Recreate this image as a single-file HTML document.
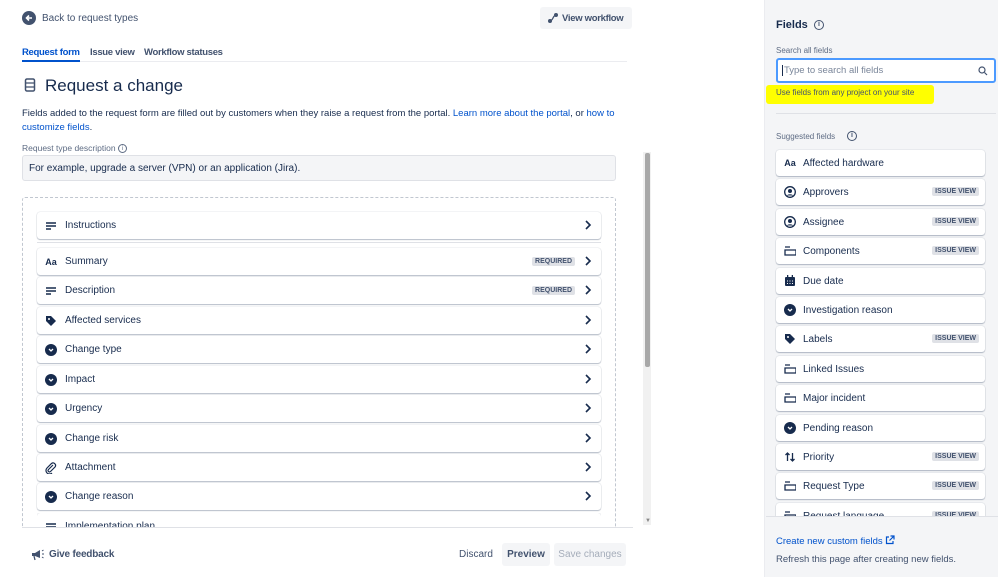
<!DOCTYPE html>
<html><head><meta charset="utf-8"><style>
*{box-sizing:border-box;margin:0;padding:0}
body{width:998px;height:577px;overflow:hidden;background:#fff;font-family:"Liberation Sans",sans-serif;color:#172b4d;position:relative;font-size:10px}
.a{position:absolute}
.row{position:absolute;left:37px;width:564px;height:27px;background:#fff;border-radius:3px;box-shadow:0 1px 1px rgba(9,30,66,.25),0 0 1px rgba(9,30,66,.31);display:flex;align-items:center;padding-left:8px;font-size:10px;color:#172b4d}
.row .ic{width:12px;height:12px;margin-right:8px;display:flex;align-items:center;justify-content:center}
.row .chev{position:absolute;right:9px;top:8px}
.req{position:absolute;right:26px;top:9px;background:#dfe1e6;color:#42526e;font-size:7px;font-weight:bold;padding:1px 3px;border-radius:2px}
.card{position:absolute;left:776px;width:209px;height:26px;background:#fff;border-radius:3px;box-shadow:0 1px 1px rgba(9,30,66,.25),0 0 1px rgba(9,30,66,.31);display:flex;align-items:center;padding-left:8px;font-size:10px}
.card .ic{width:12px;height:12px;margin-right:7px;display:flex;align-items:center;justify-content:center}
.iv{position:absolute;right:6px;top:8px;background:#dfe1e6;color:#42526e;font-size:7px;font-weight:bold;padding:1px 3px;border-radius:2px}
.dd{width:12px;height:12px;border-radius:50%;background:#172b4d;display:flex;align-items:center;justify-content:center}
.tab{position:absolute;top:47px;font-size:9.5px;font-weight:bold;letter-spacing:-0.3px;color:#42526e}
</style></head><body>
<!-- header -->
<svg class="a" style="left:22px;top:11px" width="14" height="14"><circle cx="7" cy="7" r="7" fill="#42526e"/><path d="M10 7H4.5M7 4.5L4.5 7 7 9.5" stroke="#fff" stroke-width="1.6" fill="none"/></svg>
<div class="a" style="left:42px;top:13px;font-size:10px;color:#42526e">Back to request types</div>
<div class="a" style="left:540px;top:7px;width:92px;height:22px;background:#f4f5f7;border-radius:3px;font-size:9.5px;letter-spacing:-0.3px;font-weight:bold;color:#42526e;padding:6px 0 0 22px">View workflow</div>
<svg class="a" style="left:547px;top:12px" width="12" height="12"><circle cx="3" cy="9" r="2" fill="#42526e"/><circle cx="9" cy="3" r="2" fill="#42526e"/><path d="M3 9C6 9 6 3 9 3" stroke="#42526e" fill="none" stroke-width="1.3"/></svg>
<div class="tab" style="left:22px;color:#0052cc">Request form</div>
<div class="a" style="left:22px;top:60px;width:58px;height:2px;background:#0052cc"></div>
<div class="tab" style="left:90px">Issue view</div>
<div class="tab" style="left:144px">Workflow statuses</div>
<div class="a" style="left:80px;top:61px;width:547px;height:1px;background:#ebecf0"></div>
<svg class="a" style="left:24px;top:78px" width="12" height="14"><rect x="1.5" y="1" width="9" height="12" rx="1.5" stroke="#42526e" stroke-width="1.5" fill="none"/><path d="M2 5H10M2 9H10" stroke="#42526e" stroke-width="1.3"/></svg>
<div class="a" style="left:45px;top:76px;font-size:17px;color:#172b4d">Request a change</div>
<div class="a" style="left:22px;top:107px;width:600px;font-size:9.5px;line-height:13.5px;color:#172b4d">Fields added to the request form are filled out by customers when they raise a request from the portal. <span style="color:#0052cc">Learn more about the portal</span>, or <span style="color:#0052cc">how to customize fields</span>.</div>
<div class="a" style="left:22px;top:143px;font-size:8.5px;color:#5e6c84">Request type description <span style="display:inline-block;width:9px;height:9px;border:1px solid #5e6c84;border-radius:50%;font-size:6px;text-align:center;line-height:8px;vertical-align:middle">i</span></div>
<div class="a" style="left:22px;top:155px;width:594px;height:26px;background:#f4f5f7;border:1px solid #dfe1e6;border-radius:3px;font-size:10px;padding:7px 0 0 6px">For example, upgrade a server (VPN) or an application (Jira).</div>
<div class="a" style="left:22px;top:197px;width:594px;height:360px;border:1px dashed #c1c7d0;border-radius:3px"></div>
<div class="a" style="left:0;top:528px;width:640px;height:49px;background:#fff"></div>
<div class="a" style="left:22px;top:527px;width:611px;height:1px;background:#dfe1e6"></div>
<!-- scrollbar -->
<div class="a" style="left:643px;top:152px;width:8px;height:373px;background:#f1f1f1"></div>
<div class="a" style="left:645px;top:153px;width:5px;height:214px;background:#a8a8a8;border-radius:2px"></div>
<div class="a" style="left:645px;top:518px;font-size:6px;color:#888">▼</div>

<!-- rows -->
<div class="row" style="top:212px"><span class="ic"><svg width="12" height="12"><path d="M1 3H11M1 6H11M1 9H6" stroke="#172b4d" stroke-width="1.5"/></svg></span>Instructions<svg class="chev" width="8" height="10"><path d="M2 1L6 5 2 9" stroke="#172b4d" stroke-width="1.6" fill="none"/></svg></div>
<div class="a" style="left:37px;top:242px;width:564px;height:1px;background:#dfe1e6"></div>
<div class="row" style="top:248px"><span class="ic" style="font-weight:bold;font-size:9px">Aa</span>Summary<span class="req">REQUIRED</span><svg class="chev" width="8" height="10"><path d="M2 1L6 5 2 9" stroke="#172b4d" stroke-width="1.6" fill="none"/></svg></div>
<div class="row" style="top:277px"><span class="ic"><svg width="12" height="12"><path d="M1 3H11M1 6H11M1 9H6" stroke="#172b4d" stroke-width="1.5"/></svg></span>Description<span class="req">REQUIRED</span><svg class="chev" width="8" height="10"><path d="M2 1L6 5 2 9" stroke="#172b4d" stroke-width="1.6" fill="none"/></svg></div>
<div class="row" style="top:307px"><span class="ic"><svg width="12" height="12"><path d="M1 1H6L11 6 6 11 1 6Z" fill="#172b4d"/><circle cx="4" cy="4" r="1" fill="#fff"/></svg></span>Affected services<svg class="chev" width="8" height="10"><path d="M2 1L6 5 2 9" stroke="#172b4d" stroke-width="1.6" fill="none"/></svg></div>
<div class="row" style="top:336px"><span class="ic"><span class="dd"><svg width="6" height="4"><path d="M1 1L3 3 5 1" stroke="#fff" stroke-width="1.3" fill="none"/></svg></span></span>Change type<svg class="chev" width="8" height="10"><path d="M2 1L6 5 2 9" stroke="#172b4d" stroke-width="1.6" fill="none"/></svg></div>
<div class="row" style="top:366px"><span class="ic"><span class="dd"><svg width="6" height="4"><path d="M1 1L3 3 5 1" stroke="#fff" stroke-width="1.3" fill="none"/></svg></span></span>Impact<svg class="chev" width="8" height="10"><path d="M2 1L6 5 2 9" stroke="#172b4d" stroke-width="1.6" fill="none"/></svg></div>
<div class="row" style="top:395px"><span class="ic"><span class="dd"><svg width="6" height="4"><path d="M1 1L3 3 5 1" stroke="#fff" stroke-width="1.3" fill="none"/></svg></span></span>Urgency<svg class="chev" width="8" height="10"><path d="M2 1L6 5 2 9" stroke="#172b4d" stroke-width="1.6" fill="none"/></svg></div>
<div class="row" style="top:425px"><span class="ic"><span class="dd"><svg width="6" height="4"><path d="M1 1L3 3 5 1" stroke="#fff" stroke-width="1.3" fill="none"/></svg></span></span>Change risk<svg class="chev" width="8" height="10"><path d="M2 1L6 5 2 9" stroke="#172b4d" stroke-width="1.6" fill="none"/></svg></div>
<div class="row" style="top:454px"><span class="ic"><svg width="12" height="12"><path d="M8 3L3.5 7.5a1.3 1.3 0 0 0 2 2L10 5a2.5 2.5 0 0 0-3.5-3.5L2 6a3.5 3.5 0 0 0 5 5" stroke="#172b4d" stroke-width="1.2" fill="none"/></svg></span>Attachment<svg class="chev" width="8" height="10"><path d="M2 1L6 5 2 9" stroke="#172b4d" stroke-width="1.6" fill="none"/></svg></div>
<div class="row" style="top:483px"><span class="ic"><span class="dd"><svg width="6" height="4"><path d="M1 1L3 3 5 1" stroke="#fff" stroke-width="1.3" fill="none"/></svg></span></span>Change reason<svg class="chev" width="8" height="10"><path d="M2 1L6 5 2 9" stroke="#172b4d" stroke-width="1.6" fill="none"/></svg></div>
<div class="a" style="left:37px;top:513px;width:564px;height:14px;overflow:hidden"><div class="row" style="left:0;top:0">
<span class="ic"><svg width="12" height="12"><path d="M1 3H11M1 6H11M1 9H6" stroke="#172b4d" stroke-width="1.5"/></svg></span>Implementation plan</div></div>

<!-- footer -->
<svg class="a" style="left:31px;top:548px" width="13" height="13"><path d="M1 5H4L9 2V10L4 8H1Z" fill="#42526e"/><path d="M3 8L4 12" stroke="#42526e" stroke-width="1.3"/><path d="M11 3L12.5 2M11 6H13M11 9L12.5 10" stroke="#42526e"/></svg>
<div class="a" style="left:49px;top:549px;font-size:10px;font-weight:bold;letter-spacing:-0.2px;color:#42526e">Give feedback</div>
<div class="a" style="left:459px;top:549px;font-size:10px;color:#42526e">Discard</div>
<div class="a" style="left:502px;top:543px;width:48px;height:23px;background:#f4f5f7;border-radius:3px;font-size:10px;font-weight:bold;color:#42526e;text-align:center;line-height:23px">Preview</div>
<div class="a" style="left:554px;top:543px;width:72px;height:23px;background:#f4f5f7;border-radius:3px;font-size:10px;color:#a5adba;text-align:center;line-height:23px">Save changes</div>

<!-- right panel -->
<div class="a" style="left:764px;top:0;width:234px;height:577px;background:#f4f5f7;border-left:1px solid #ebecf0"></div>
<div class="a" style="left:776px;top:19px;font-size:11px;font-weight:bold;color:#172b4d">Fields</div>
<div class="a" style="left:814px;top:20px;width:10px;height:10px;border:1.2px solid #42526e;border-radius:50%;font-size:7px;text-align:center;line-height:8px;font-weight:bold;color:#42526e">i</div>
<div class="a" style="left:776px;top:46px;font-size:8px;color:#5e6c84">Search all fields</div>
<div class="a" style="left:776px;top:58px;width:220px;height:25px;background:#fff;border:2px solid #4c9aff;border-radius:3px;font-size:9.5px;color:#7a869a;padding:5px 0 0 4px"><span style="border-left:1px solid #172b4d;padding-left:1px">Type to search all fields</span></div>
<svg class="a" style="left:978px;top:66px" width="10" height="10"><circle cx="4" cy="4" r="3" stroke="#42526e" stroke-width="1.2" fill="none"/><path d="M6.5 6.5L9 9" stroke="#42526e" stroke-width="1.2"/></svg>
<div class="a" style="left:766px;top:85px;width:168px;height:19px;background:#ffff00;border-radius:3px"></div>
<div class="a" style="left:776px;top:88px;font-size:8px;color:#42526e">Use fields from any project on your site</div>
<div class="a" style="left:776px;top:113px;width:220px;height:1px;background:#dfe1e6"></div>
<div class="a" style="left:776px;top:132px;font-size:8px;color:#5e6c84">Suggested fields</div>
<div class="a" style="left:847px;top:131px;width:10px;height:10px;border:1.2px solid #42526e;border-radius:50%;font-size:7px;text-align:center;line-height:8px;font-weight:bold;color:#42526e">i</div>

<div class="a" style="left:766px;top:148px;width:232px;height:368px;overflow:hidden">
<div style="position:relative;left:-766px;top:-148px;width:998px;height:600px">
<div class="card" style="top:150px"><span class="ic" style="font-weight:bold;font-size:9px">Aa</span>Affected hardware</div>
<div class="card" style="top:179px"><span class="ic"><svg width="12" height="12"><circle cx="6" cy="6" r="5.3" stroke="#172b4d" stroke-width="1.3" fill="none"/><circle cx="6" cy="5" r="2" fill="#172b4d"/><path d="M2.8 9.5a4 3 0 0 1 6.4 0" fill="#172b4d"/></svg></span>Approvers<span class="iv">ISSUE VIEW</span></div>
<div class="card" style="top:209px"><span class="ic"><svg width="12" height="12"><circle cx="6" cy="6" r="5.3" stroke="#172b4d" stroke-width="1.3" fill="none"/><circle cx="6" cy="5" r="2" fill="#172b4d"/><path d="M2.8 9.5a4 3 0 0 1 6.4 0" fill="#172b4d"/></svg></span>Assignee<span class="iv">ISSUE VIEW</span></div>
<div class="card" style="top:238px"><span class="ic"><svg width="13" height="10"><path d="M1 1H6M1 4H12V9H1Z" stroke="#172b4d" stroke-width="1.3" fill="none"/></svg></span>Components<span class="iv">ISSUE VIEW</span></div>
<div class="card" style="top:268px"><span class="ic"><svg width="12" height="12"><rect x="1" y="2" width="10" height="9" rx="1" fill="#172b4d"/><rect x="3" y="0" width="1.3" height="3" fill="#172b4d"/><rect x="7.7" y="0" width="1.3" height="3" fill="#172b4d"/><path d="M3 6H4M5.5 6H6.5M8 6H9M3 8.5H4M5.5 8.5H6.5M8 8.5H9" stroke="#fff"/></svg></span>Due date</div>
<div class="card" style="top:297px"><span class="ic"><span class="dd"><svg width="6" height="4"><path d="M1 1L3 3 5 1" stroke="#fff" stroke-width="1.3" fill="none"/></svg></span></span>Investigation reason</div>
<div class="card" style="top:326px"><span class="ic"><svg width="12" height="12"><path d="M1 1H6L11 6 6 11 1 6Z" fill="#172b4d"/><circle cx="4" cy="4" r="1" fill="#fff"/></svg></span>Labels<span class="iv">ISSUE VIEW</span></div>
<div class="card" style="top:356px"><span class="ic"><svg width="13" height="10"><path d="M1 1H6M1 4H12V9H1Z" stroke="#172b4d" stroke-width="1.3" fill="none"/></svg></span>Linked Issues</div>
<div class="card" style="top:385px"><span class="ic"><svg width="13" height="10"><path d="M1 1H6M1 4H12V9H1Z" stroke="#172b4d" stroke-width="1.3" fill="none"/></svg></span>Major incident</div>
<div class="card" style="top:415px"><span class="ic"><span class="dd"><svg width="6" height="4"><path d="M1 1L3 3 5 1" stroke="#fff" stroke-width="1.3" fill="none"/></svg></span></span>Pending reason</div>
<div class="card" style="top:444px"><span class="ic"><svg width="12" height="12"><path d="M3.5 10V2M1.5 4L3.5 2 5.5 4M8.5 2V10M6.5 8L8.5 10 10.5 8" stroke="#172b4d" stroke-width="1.3" fill="none"/></svg></span>Priority<span class="iv">ISSUE VIEW</span></div>
<div class="card" style="top:473px"><span class="ic"><svg width="13" height="10"><path d="M1 1H6M1 4H12V9H1Z" stroke="#172b4d" stroke-width="1.3" fill="none"/></svg></span>Request Type<span class="iv">ISSUE VIEW</span></div>
<div class="card" style="top:503px"><span class="ic"><svg width="13" height="10"><path d="M1 1H6M1 4H12V9H1Z" stroke="#172b4d" stroke-width="1.3" fill="none"/></svg></span>Request language<span class="iv">ISSUE VIEW</span></div>
</div></div>
<div class="a" style="left:766px;top:516px;width:232px;height:1px;background:#dfe1e6"></div>
<div class="a" style="left:776px;top:535px;font-size:9.5px;color:#0052cc">Create new custom fields <svg width="10" height="10" style="vertical-align:-1px"><path d="M4 2H1.5V8.5H8V6M5.5 1H9V4.5M9 1L4.5 5.5" stroke="#0052cc" stroke-width="1.2" fill="none"/></svg></div>
<div class="a" style="left:776px;top:554px;font-size:9.5px;color:#42526e">Refresh this page after creating new fields.</div>
</body></html>
